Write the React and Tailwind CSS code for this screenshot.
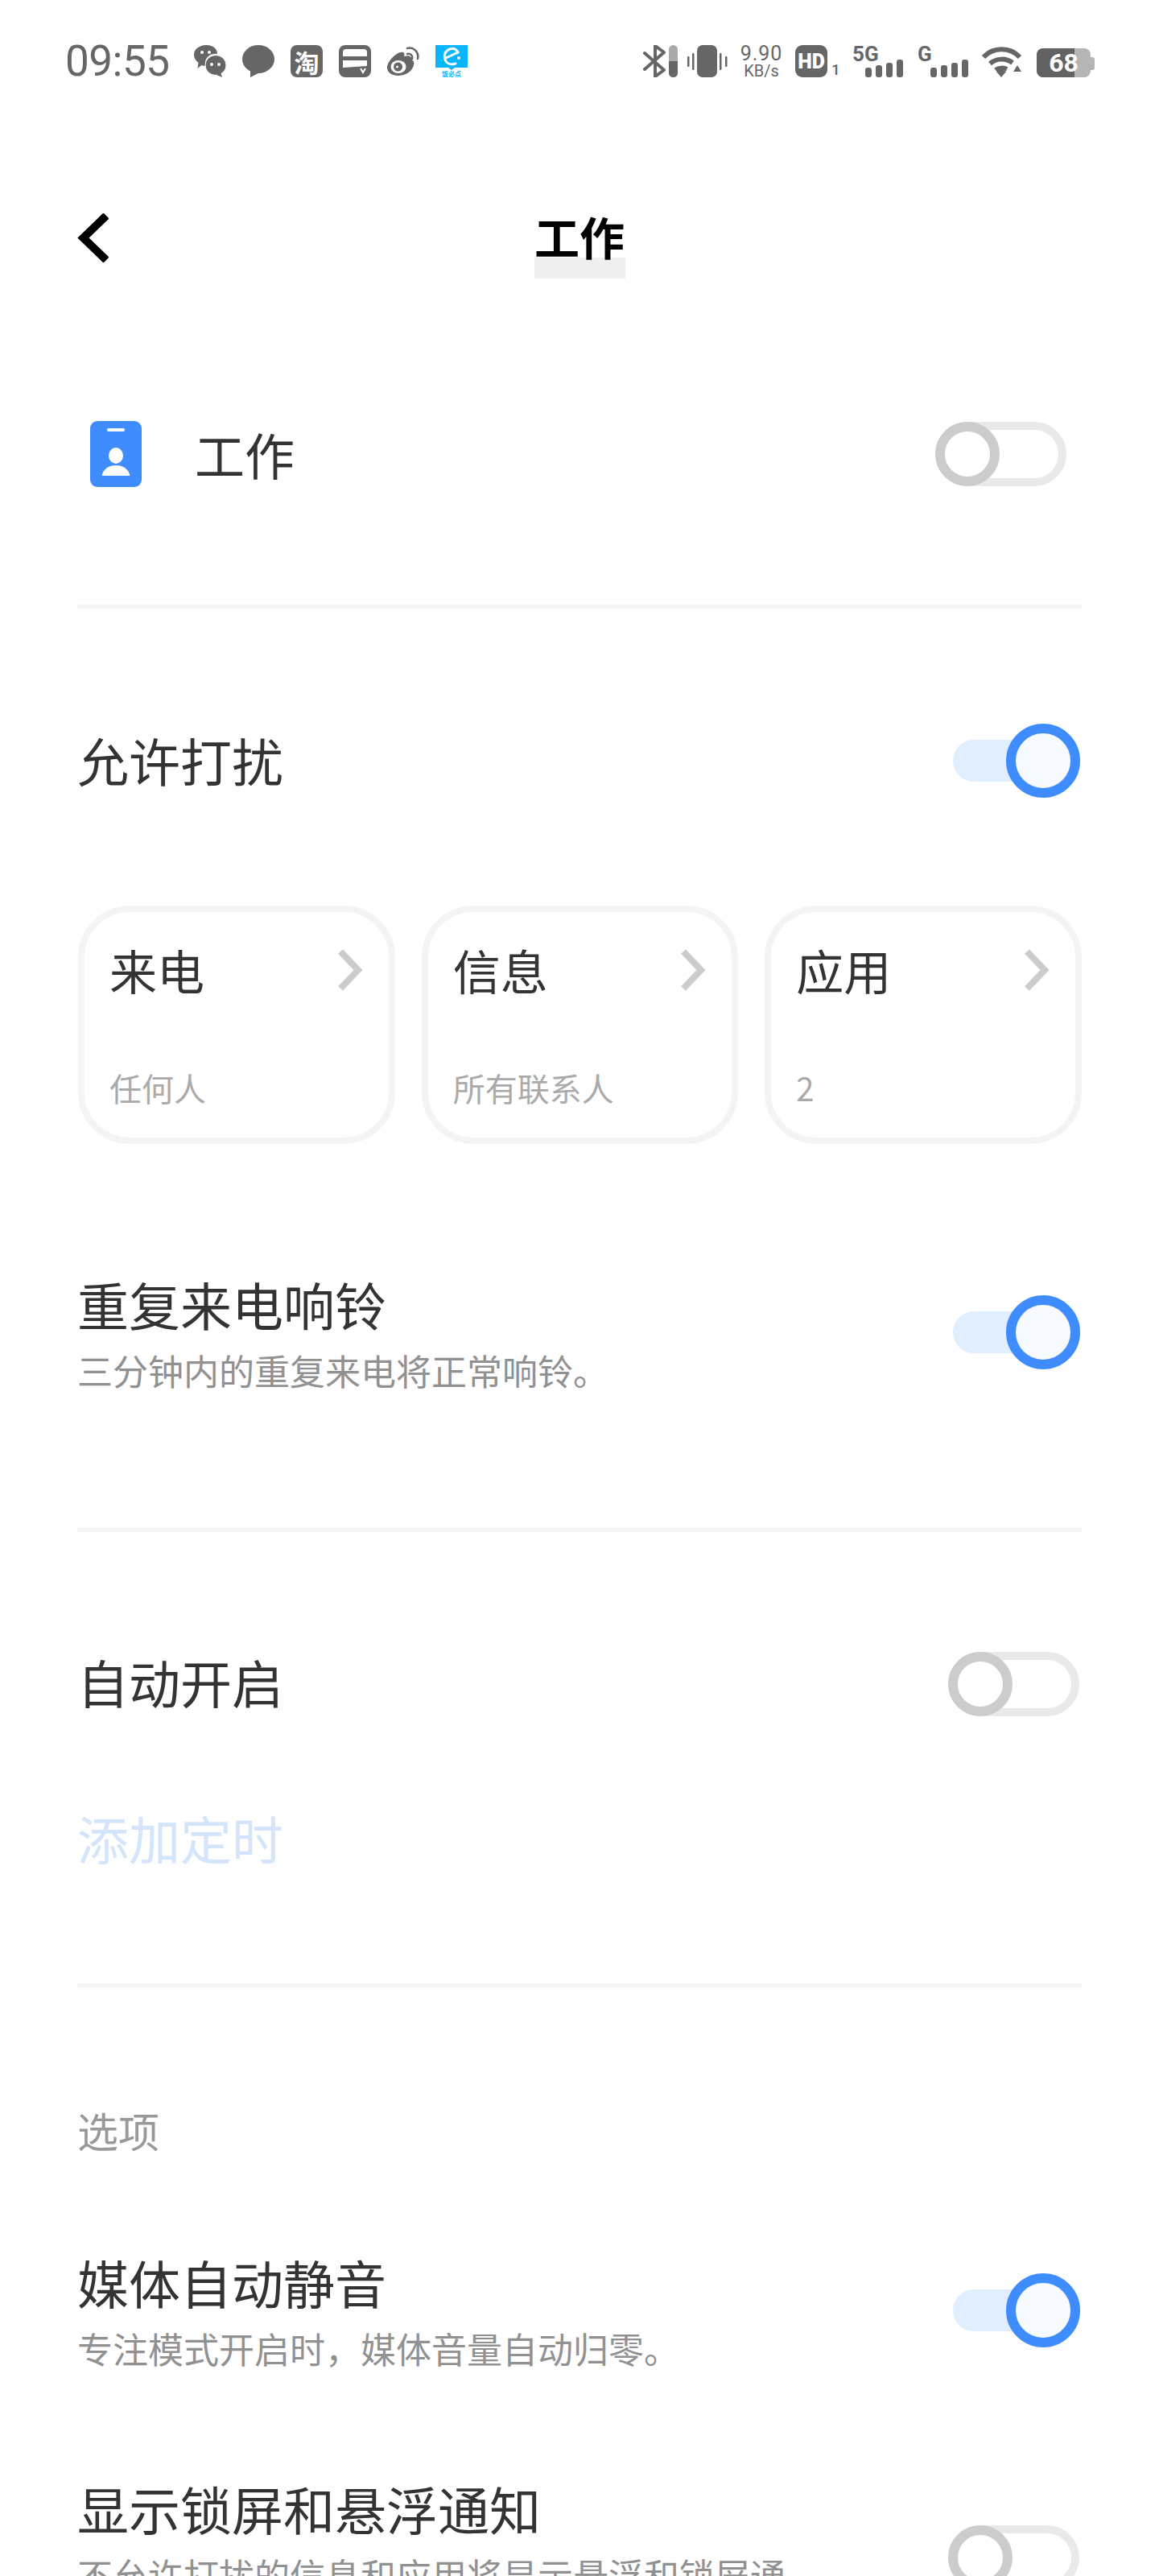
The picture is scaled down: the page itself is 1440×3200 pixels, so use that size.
// Focus mode settings screen ("工作") on a phone.
const CJK = 'font-["Noto_Sans_CJK_SC","Noto_Sans",sans-serif]';

function WechatIcon() {
  return (
    <svg viewBox="0 0 40 40" className="h-10 w-10" fill="#666666">
      <path d="M16 0c8 0 13 5 13 11-7-1-14 3-15 10-.3 2 0 3 .5 5-1.500 0-3-.2-5-1l-5 4 1-7C2 19 0 16 0 12 0 5 7 0 16 0z" />
      <ellipse cx="27" cy="25" rx="13" ry="12.500" stroke="#ffffff" strokeWidth="1" />
      <path d="M33 34l2 6-7-3z" />
      <circle cx="10" cy="9" r="2" fill="#fff" />
      <circle cx="19" cy="9" r="2" fill="#fff" />
      <circle cx="22" cy="24" r="2" fill="#fff" />
      <circle cx="31" cy="24" r="2" fill="#fff" />
    </svg>
  );
}

function BubbleIcon() {
  return (
    <svg viewBox="0 0 40 40" className="h-10 w-10" fill="#666666">
      <ellipse cx="20" cy="17.500" rx="20" ry="17.500" />
      <path d="M10 30l0 10 12-6z" />
    </svg>
  );
}

function TaobaoIcon() {
  return (
    <div className={`flex h-10 w-10 items-center justify-center rounded-[8px] bg-[#666666] text-[31px] leading-none font-bold text-white ${CJK}`}>
      淘
    </div>
  );
}

function CardIcon() {
  return (
    <svg viewBox="0 0 40 40" className="h-10 w-10">
      <rect width="40" height="40" rx="8" fill="#666666" />
      <path d="M5 14V9q0-4 4-4h22q4 0 4 4v5z" fill="#fff" />
      <path d="M5 19h30v7l-30 2z" fill="#fff" />
      <path d="M27 29l3 5 3-5" fill="none" stroke="#fff" strokeWidth="2" />
    </svg>
  );
}

function WeiboIcon() {
  return (
    <svg viewBox="0 0 40 40" className="h-10 w-10" fill="none">
      <path d="M17 9c4-1 5 1 4 5 6-2 10 0 9 4 3 1 4 4 3 7-2 8-10 13-19 13C6 38 0 34 0 28c0-7 10-18 17-19z" fill="#666666" />
      <ellipse cx="14" cy="27" rx="9.500" ry="8" fill="#fff" />
      <circle cx="13.500" cy="27" r="5.500" fill="#666666" />
      <circle cx="12.500" cy="27" r="1.500" fill="#fff" />
      <path d="M25 11c4-1 7 2 6 6" stroke="#666666" strokeWidth="2.500" strokeLinecap="round" />
      <path d="M25 4c7-2 15 4 13 13" stroke="#666666" strokeWidth="2.500" strokeLinecap="round" />
    </svg>
  );
}

function ElemeIcon() {
  return (
    <div className="flex h-10 w-10 flex-col items-center">
      <svg viewBox="0 0 40 31" className="h-[31px] w-10">
        <path d="M0 0h40v27q0 1-1 1H24l-4 3-4-3H1q-1 0-1-1z" fill="#08b6fd" />
        <path d="M28 9c-2-4-6-6-10-4-6 2-8 8-6 13 2 5 7 7 13 5" fill="none" stroke="#fff" strokeWidth="3" strokeLinecap="round" />
        <path d="M13 16l15-7" stroke="#fff" strokeWidth="3" strokeLinecap="round" />
        <circle cx="29" cy="16" r="2" fill="#fff" />
      </svg>
      <span className={`mt-[1px] text-[8px] leading-[8px] font-bold text-[#08b6fd] ${CJK}`}>饭必点</span>
    </div>
  );
}

function BluetoothIcon() {
  return (
    <svg viewBox="0 0 43 40" className="h-10 w-[43px]">
      <path d="M2 10l24 21-11 8V1l11 8L2 30" fill="none" stroke="#666666" strokeWidth="4" strokeLinejoin="round" strokeLinecap="round" />
      <rect x="32" y="0" width="11" height="40" rx="5.500" fill="#aaaaaa" />
      <path d="M32 20h11v14.500a5.500 5.500 0 0 1-11 0z" fill="#666666" />
    </svg>
  );
}

function VibrateIcon() {
  return (
    <svg viewBox="0 0 50 40" className="h-10 w-[50px]" fill="#666666">
      <rect x="12" y="0" width="25" height="40" rx="7" />
      <rect x="0" y="14" width="2.500" height="13" rx="1" />
      <rect x="6" y="10" width="2.500" height="21" rx="1" />
      <rect x="40" y="10" width="2.500" height="21" rx="1" />
      <rect x="47" y="14" width="2.500" height="13" rx="1" />
    </svg>
  );
}

function SignalBars() {
  return (
    <svg viewBox="0 0 47 22" className="h-[22px] w-[47px]" fill="#666666">
      <rect x="0" y="10" width="8" height="12" rx="3" />
      <rect x="13" y="7" width="8" height="15" rx="3" />
      <rect x="26" y="4" width="8" height="18" rx="3" />
      <rect x="39" y="0" width="8" height="22" rx="3" />
    </svg>
  );
}

function WifiIcon() {
  return (
    <svg viewBox="0 0 49 38" className="mt-[2px] h-[38px] w-[49px]" fill="none" stroke="#666666" strokeWidth="6">
      <path d="M2 13C14 0 35 0 47 13" />
      <path d="M10 21c8-7 20-7 28-1" />
      <path d="M17 29c4-3 10-3 14-1" />
      <path d="M18 31l6-3 6 3-6 7z" fill="#666666" stroke="none" />
      <path d="M39 31l5-8 5 8z" fill="#666666" stroke="none" />
    </svg>
  );
}

function StatusBar() {
  return (
    <div className="flex h-[152px] items-center justify-between pr-[80px] pl-[81px]">
      <div className="flex items-center">
        <span className="w-[160px] font-['Roboto',sans-serif] text-[53px] leading-none tracking-[-0.5px] text-[#666666]">09:55</span>
        <div className="flex items-center gap-5">
          <WechatIcon />
          <BubbleIcon />
          <TaobaoIcon />
          <CardIcon />
          <WeiboIcon />
          <ElemeIcon />
        </div>
      </div>
      <div className="flex h-10 items-center font-['Roboto',sans-serif] text-[#666666]">
        <BluetoothIcon />
        <div className="ml-3">
          <VibrateIcon />
        </div>
        <div className="ml-4 flex w-[52px] flex-col items-center">
          <span className="text-[25px] leading-[24px] tracking-[1px]">9.90</span>
          <span className="text-[20px] leading-[18px]">KB/s</span>
        </div>
        <div className="ml-4 flex h-10 w-10 items-center justify-center rounded-[9px] bg-[#666666] text-[25px] leading-none font-black text-white">
          HD
        </div>
        <span className="mt-[20px] ml-[5px] w-[7px] text-[19px] leading-none font-medium">1</span>
        <div className="relative ml-[19px] flex h-10 w-[63px] items-end justify-end">
          <span className="absolute top-0 left-0 text-[26px] leading-[22px] font-bold">5G</span>
          <SignalBars />
        </div>
        <div className="relative ml-[18px] flex h-10 w-[63px] items-end justify-end">
          <span className="absolute top-0 left-0 text-[26px] leading-[22px] font-bold">G</span>
          <SignalBars />
        </div>
        <div className="ml-[17px] flex h-10 items-start">
          <WifiIcon />
        </div>
        <div className="ml-[19px] flex h-10 items-end">
          <div className="relative flex h-[36px] w-[67px] items-center justify-center overflow-hidden rounded-[8px] bg-[#b5b5b5] text-[32px] leading-none font-bold text-white">
            <div className="absolute inset-y-0 left-0 w-[47px] bg-[#626262]" />
            <span className="relative">68</span>
          </div>
          <div className="mb-[9px] h-[16px] w-[5px] rounded-r-[3px] bg-[#b5b5b5]" />
        </div>
      </div>
    </div>
  );
}

function NavBar() {
  return (
    <div className="relative flex h-[286px] items-center justify-center">
      <svg viewBox="0 0 39 61" className="absolute top-[113px] left-[96px] h-[61px] w-[39px]">
        <path d="M36 3L7.500 30.500 36 58" fill="none" stroke="#000000" strokeWidth="10" />
      </svg>
      <h1 className={`relative mt-[14px] h-[88px] w-[113px] text-center text-[56px] leading-[70px] font-bold text-black ${CJK}`}>
        <div className="absolute inset-x-0 top-[62px] h-[26px] bg-[#efefef]" />
        <span className="relative">工作</span>
      </h1>
    </div>
  );
}

function Toggle({ on, className = '' }) {
  if (on) {
    return (
      <div className={`relative h-[92px] w-[158px] flex-none ${className}`}>
        <div className="absolute top-[20px] left-0 h-[52px] w-[144px] rounded-full bg-[#e1eeff]" />
        <div className="absolute top-0 right-0 h-[92px] w-[92px] rounded-full border-[12px] border-[#3f8cff] bg-[#f7fbff]" />
      </div>
    );
  }
  return (
    <div className={`relative h-[80px] w-[163px] flex-none rounded-full border-[10px] border-[#e9e9e9] bg-white ${className}`}>
      <div className="absolute top-[-10px] left-[-10px] h-[80px] w-[80px] rounded-full border-[12px] border-[#cccccc] bg-white" />
    </div>
  );
}

function Divider({ className }) {
  return <div className={`h-[5px] bg-[#f5f5f5] ${className}`} />;
}

function Card({ title, sub }) {
  return (
    <div className="flex h-[296px] flex-1 flex-col justify-between rounded-[64px] border-[8px] border-[#f4f4f4] pt-[42px] pr-[32px] pb-[42px] pl-[31px]">
      <div className="flex items-center justify-between">
        <span className="text-[59px] leading-[60px] text-[#333333]">{title}</span>
        <svg viewBox="0 0 32 52" className="h-[52px] w-8">
          <path d="M4 3l22 23L4 49" fill="none" stroke="#cccccc" strokeWidth="8" />
        </svg>
      </div>
      <span className="text-[40px] leading-[40px] text-[#aaaaaa]">{sub}</span>
    </div>
  );
}

function DetailRow({ title, sub, on, className, toggleClass }) {
  return (
    <div className={`flex items-start justify-between ${className}`}>
      <div className="w-[890px]">
        <div className="text-[64px] leading-[56px] text-[#333333]">{title}</div>
        <div className="mt-[33px] text-[44px] leading-[44px] text-[#919191]">{sub}</div>
      </div>
      <Toggle on={on} className={toggleClass} />
    </div>
  );
}

export default function App() {
  return (
    <div className={`relative h-[3200px] w-[1440px] overflow-hidden bg-white ${CJK}`}>
      <StatusBar />
      <NavBar />

      <div className="px-[96px]">
        <div className="flex h-[252px] items-center justify-between pr-[19px] pl-[16px]">
          <div className="flex items-center">
            <svg viewBox="0 0 64 82" className="h-[82px] w-[64px]">
              <rect width="64" height="82" rx="9" fill="#3f8cff" />
              <rect x="21" y="9" width="22" height="4" rx="2" fill="#fff" />
              <ellipse cx="32" cy="43" rx="9" ry="10" fill="#fff" />
              <path d="M14.500 68c2-9 9-13 17.500-13s15.500 4 17.500 13z" fill="#fff" />
            </svg>
            <span className="ml-[66px] text-[62px] leading-none text-[#333333]">工作</span>
          </div>
          <Toggle on={false} />
        </div>
        <Divider className="mt-[61px]" />

        <div className="mt-[139px] flex h-[100px] items-center justify-between pr-[2px]">
          <span className="mb-[5px] text-[64px] leading-none text-[#333333]">允许打扰</span>
          <Toggle on />
        </div>

        <div className="mt-[130px] ml-[1px] flex gap-[33px]">
          <Card title="来电" sub="任何人" />
          <Card title="信息" sub="所有联系人" />
          <Card title="应用" sub="2" />
        </div>

        <DetailRow
          className="mt-[170px]"
          title="重复来电响铃"
          sub="三分钟内的重复来电将正常响铃。"
          on
          toggleClass="mt-[18px] mr-[2px]"
        />
        <Divider className="mt-[174px]" />

        <div className="mt-[139px] flex h-[100px] items-center justify-between pr-[3px]">
          <span className="mb-[8px] text-[64px] leading-none text-[#333333]">自动开启</span>
          <Toggle on={false} />
        </div>
        <div className="mt-[108px] text-[64px] leading-[64px] text-[#d3e4fb]">添加定时</div>
        <Divider className="mt-[150px]" />

        <div className="mt-[152px] text-[51px] leading-[50px] text-[#999999]">选项</div>
        <DetailRow
          className="mt-[135px]"
          title="媒体自动静音"
          sub="专注模式开启时，媒体音量自动归零。"
          on
          toggleClass="mt-[18px] mr-[2px]"
        />
        <DetailRow
          className="mt-[148px]"
          title="显示锁屏和悬浮通知"
          sub="不允许打扰的信息和应用将显示悬浮和锁屏通知。"
          on={false}
          toggleClass="mt-[50px] mr-[3px]"
        />
      </div>
    </div>
  );
}
